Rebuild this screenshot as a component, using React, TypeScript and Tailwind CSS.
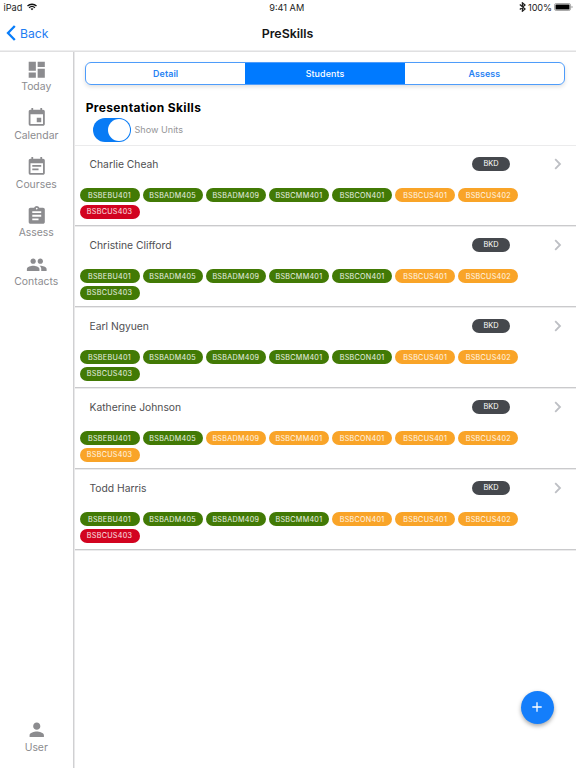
import type { ReactNode } from "react";
import { MdAssignment, MdDashboard, MdPeople, MdPerson } from "react-icons/md";
import { clsx } from "clsx";

type Status = "green" | "orange" | "red";

function CalendarIcon({ children }: { children: ReactNode }) {
  return (
    <svg viewBox="0 0 24 24" fill="currentColor" className="size-[21.5px]">
      <path d="M19 3h-1V1h-2v2H8V1H6v2H5c-1.11 0-1.99.9-1.99 2L3 19c0 1.1.89 2 2 2h14c1.1 0 2-.9 2-2V5c0-1.1-.9-2-2-2zm0 16H5V8h14v11z" />
      {children}
    </svg>
  );
}

const navItems = [
  { label: "Today", icon: <MdDashboard size={21.5} /> },
  {
    label: "Calendar",
    icon: (
      <CalendarIcon>
        <path d="M12 12h5v5h-5z" />
      </CalendarIcon>
    ),
  },
  {
    label: "Courses",
    icon: (
      <CalendarIcon>
        <path d="M7 10h10v2H7zM7 14h7v2H7z" />
      </CalendarIcon>
    ),
  },
  { label: "Assess", icon: <MdAssignment size={21.5} /> },
  { label: "Contacts", icon: <MdPeople size={21.5} /> },
];

const units = [
  "BSBEBU401",
  "BSBADM405",
  "BSBADM409",
  "BSBCMM401",
  "BSBCON401",
  "BSBCUS401",
  "BSBCUS402",
  "BSBCUS403",
];

// one letter per unit: g = green, o = orange, r = red
const students = [
  { name: "Charlie Cheah", results: "gggggoor" },
  { name: "Christine Clifford", results: "gggggoog" },
  { name: "Earl Ngyuen", results: "gggggoog" },
  { name: "Katherine Johnson", results: "ggoooooo" },
  { name: "Todd Harris", results: "ggggooor" },
];

const statusOf: Record<string, Status> = { g: "green", o: "orange", r: "red" };

const pillColors: Record<Status, string> = {
  green: "bg-[#427a05]",
  orange: "bg-[#f9a428]",
  red: "bg-[#d20320]",
};

function StatusBar() {
  return (
    <div className="grid h-[15px] shrink-0 grid-cols-3 items-center pl-[3.5px] pr-[3px] text-[9.2px] text-[#222]">
      <div className="flex items-center gap-[5px]">
        <span>iPad</span>
        <svg width="10" height="8" viewBox="0 0 20 15" fill="none" stroke="#111" strokeWidth="2.7">
          <path d="M1 5.5C6 .7 14 .7 19 5.5" />
          <path d="M4.2 9C7.5 5.8 12.5 5.8 15.8 9" />
          <path d="M7 11.2C8.7 9.7 11.3 9.7 13 11.2L10 14.2Z" fill="#111" stroke="none" />
        </svg>
      </div>
      <span className="pr-[3px] text-center">9:41 AM</span>
      <div className="flex items-center justify-end">
        <svg width="7" height="10" viewBox="0 0 7 10" fill="none" stroke="#222" strokeWidth="1.25" className="mr-[2px]">
          <path d="M.8 2.5L6 7.1L3.4 9.2V.8L6 2.9L.8 7.5" />
        </svg>
        <span className="mr-[2px] tracking-[-0.1px]">100%</span>
        <svg width="19" height="8" viewBox="0 0 19 8">
          <rect x="0.5" y="0.5" width="16" height="7" rx="1.6" fill="none" stroke="#aaa" />
          <rect x="1.5" y="1.5" width="14" height="5" rx="0.6" fill="#000" />
          <path d="M17.5 2.7v2.6c.8-.3 1.2-.7 1.2-1.3s-.4-1-1.2-1.3z" fill="#999" />
        </svg>
      </div>
    </div>
  );
}

function NavItem({ label, icon }: { label: string; icon: ReactNode }) {
  return (
    <div className="flex h-[48.8px] flex-col items-center text-[#8c8c8f]">
      {icon}
      <span className="text-[10.4px] leading-[14px]">{label}</span>
    </div>
  );
}

function StudentRow({ name, results }: { name: string; results: string }) {
  return (
    <div className="h-[81px] border-b border-[#ebebec] pl-[5px] shadow-[inset_0_-1px_#cacacc]">
      <div className="flex h-[35px] items-center pl-[9.5px] pr-[14px]">
        <span className="flex-1 pt-[2px] text-[10.3px] text-[#4f4f52]">{name}</span>
        <span className="mr-[44px] flex h-3.5 w-[38px] items-center justify-center rounded-full bg-[#45484d] pt-px text-[7.4px] leading-none text-white">
          BKD
        </span>
        <svg width="8" height="12" viewBox="0 0 8 12" fill="none" stroke="#bdbfc4" strokeWidth="1.8">
          <path d="M1.2 1.2L6 6L1.2 10.8" />
        </svg>
      </div>
      <div className="-ml-[0.5px] mt-[7px] flex flex-wrap gap-x-[3.15px] gap-y-[2.6px] pr-[50px]">
        {units.map((unit, i) => (
          <span
            key={unit}
            className={clsx(
              "flex h-3.5 w-[60px] items-center justify-center rounded-full pt-px text-[7.2px] leading-none tracking-[0.28px] text-white/90",
              pillColors[statusOf[results[i]]],
            )}
          >
            {unit}
          </span>
        ))}
      </div>
    </div>
  );
}

export default function App() {
  return (
    <div className="relative flex h-[768px] w-[576px] flex-col overflow-hidden bg-white font-['Inter','Liberation_Sans',sans-serif]">
      <StatusBar />
      <header className="grid h-[37px] shrink-0 grid-cols-3 items-center border-b border-[#e0e0e1] pl-1.5 shadow-[inset_0_-1px_#eeeeef]">
        <div className="flex items-center gap-1 pt-px text-[#1e7cf2]">
          <svg width="10" height="16" viewBox="0 0 10 16" fill="none" stroke="#087dfa" strokeWidth="2.3">
            <path d="M8.8 1L2 8L8.8 15" />
          </svg>
          <span className="pt-px text-[12.2px]">Back</span>
        </div>
        <h1 className="pr-[7px] pt-[2px] text-center text-[12.4px] font-semibold text-[#151515]">PreSkills</h1>
      </header>

      <div className="flex min-h-0 flex-1">
        <aside className="flex w-[75px] shrink-0 flex-col border-r border-[#e9e9ea] pr-[1.5px] pt-[6.5px] shadow-[inset_-1px_0_#d0d0d2]">
          {navItems.map((item) => (
            <NavItem key={item.label} {...item} />
          ))}
          <div className="mt-auto">
            <NavItem label="User" icon={<MdPerson size={21.5} />} />
          </div>
        </aside>

        <main className="min-w-0 flex-1">
          <div className="h-[94px] border-b border-[#ebebec] pl-2.5 pr-[11px] pt-2.5">
            <div className="grid h-[23px] grid-cols-3 overflow-hidden rounded-md border border-[#4e9cfa] text-[8.9px] font-semibold tracking-[0.1px] text-[#2682f3] shadow-[0_2px_4px_rgba(0,0,0,0.12)]">
              <span className="flex items-center justify-center">Detail</span>
              <span className="flex items-center justify-center bg-[#007aff] font-medium text-white">Students</span>
              <span className="flex items-center justify-center">Assess</span>
            </div>
            <h2 className="ml-[0.7px] mt-[15px] text-[12px] font-bold leading-[16px] tracking-[0.35px] text-black">
              Presentation Skills
            </h2>
            <div className="mt-[2px] flex items-center pl-2">
              <div className="flex h-6 w-[38px] justify-end rounded-full bg-[#087bf5] p-px">
                <div className="size-[22px] rounded-full bg-white" />
              </div>
              <span className="ml-[3.5px] text-[9.1px] text-[#959597]">Show Units</span>
            </div>
          </div>
          {students.map((student) => (
            <StudentRow key={student.name} {...student} />
          ))}
        </main>
      </div>

      <button className="absolute bottom-[44.5px] right-[22.5px] flex size-[33px] items-center justify-center rounded-full bg-[#147efb] shadow-[0_2px_4px_rgba(0,0,0,0.35)]">
        <svg width="10" height="10" viewBox="0 0 10 10" stroke="#fff" strokeWidth="1.3">
          <path d="M5 .3V9.7M.3 5H9.7" />
        </svg>
      </button>
    </div>
  );
}
